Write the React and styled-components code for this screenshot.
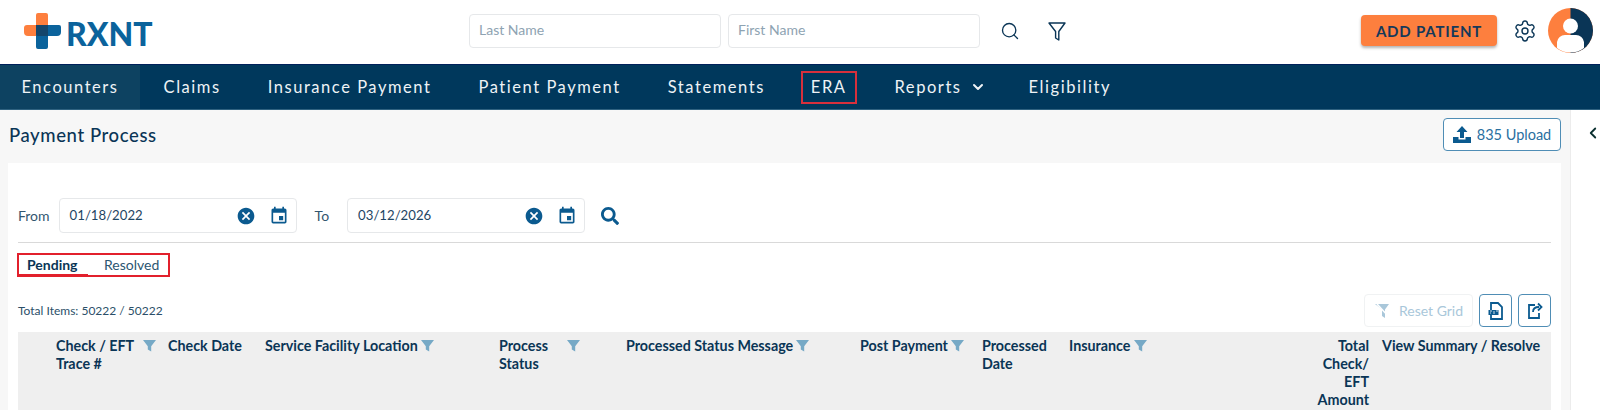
import React from 'react';
import styled, { createGlobalStyle } from 'styled-components';
import { Search, Settings, ChevronLeft, ChevronDown } from 'lucide-react';
import { MdCancel, MdEvent } from 'react-icons/md';
import { FaSearch } from 'react-icons/fa';

const GlobalStyle = createGlobalStyle`
    html, body {
        margin: 0;
        padding: 0;
        background: #fff;
    }
    body {
        font-family: "Lato", "Noto Sans", sans-serif;
        color: #0a3556;
    }
    * { box-sizing: border-box; }
`;

const Page = styled.div`
    width: 1600px;
    height: 410px;
    overflow: hidden;
    display: flex;
    flex-direction: column;
`;

const Header = styled.header`
    height: 64px;
    flex: none;
    display: flex;
    align-items: center;
    padding: 0 6px 3px 24px;
    background: #fff;
`;

const Logo = styled.div`
    width: 445px;
    display: flex;
    align-items: flex-start;
    height: 36px;
`;

const LogoText = styled.span`
    margin: 6px 0 0 5px;
    font-weight: 900;
    font-size: 32px;
    line-height: 30px;
    color: #0b639c;
`;

const TopInput = styled.div`
    width: 252px;
    height: 34px;
    margin-right: 7px;
    padding: 0 9px 3px;
    display: flex;
    align-items: center;
    border: 1px solid #e6e8ea;
    border-radius: 4px;
    font-size: 14px;
    color: #8ea3b2;
`;

const HeaderIcon = styled.span`
    display: flex;
    margin-left: ${(p) => p.$left}px;
    color: #0a3556;
`;

const AddPatient = styled.button`
    width: 136px;
    height: 31px;
    margin-left: 294px;
    border: 0;
    border-radius: 4px;
    background: #fd7f3e;
    box-shadow: 0 2px 3px rgba(0, 0, 0, 0.3);
    font-family: inherit;
    font-size: 15px;
    font-weight: 700;
    letter-spacing: 0.8px;
    color: #15395a;
`;

const Avatar = styled.svg`
    width: 45px;
    height: 45px;
    margin-left: 11px;
    flex: none;
`;

const Nav = styled.nav`
    height: 46px;
    flex: none;
    display: flex;
    align-items: center;
    background: #00385c;
    border-top: 1px solid #00205a;
    border-bottom: 1px solid #2f6280;
`;

const NavItem = styled.div`
    height: 100%;
    padding: 0 ${(p) => p.$padRight || 23.5}px 0 ${(p) => p.$padLeft || 23.5}px;
    display: flex;
    align-items: center;
    gap: 8px;
    font-size: 16.5px;
    letter-spacing: 1.55px;
    color: #eef3f6;
    background: ${(p) => (p.$active ? '#0d4261' : 'transparent')};
`;

const EraBox = styled.div`
    height: 33px;
    margin: 0 14.5px 0 12.5px;
    padding: 0 8px;
    display: flex;
    align-items: center;
    border: 2px solid #d8303c;
    font-size: 16.5px;
    letter-spacing: 1.55px;
    color: #eef3f6;
`;

const Main = styled.div`
    flex: 1;
    display: flex;
    min-height: 0;
`;

const Content = styled.main`
    flex: 1;
    padding: 0 9px 0 8px;
    background: #f7f7f7;
`;

const TitleRow = styled.div`
    height: 53px;
    display: flex;
    align-items: center;
    justify-content: space-between;
    padding: 0 0 4px 1px;
`;

const Title = styled.h1`
    margin: 0;
    font-size: 18.5px;
    font-weight: 500;
    letter-spacing: 0.6px;
    color: #0a3556;
`;

const UploadButton = styled.button`
    width: 118px;
    height: 33px;
    display: flex;
    align-items: center;
    justify-content: center;
    gap: 6px;
    border: 1px solid #4f8db5;
    border-radius: 4px;
    background: #fff;
    font-family: inherit;
    font-size: 14.5px;
    color: #2a6f9f;
`;

const Card = styled.section`
    height: 300px;
    padding: 35px 10px 0;
    background: #fff;
`;

const FilterRow = styled.div`
    display: flex;
    align-items: center;
    padding-bottom: 9px;
    border-bottom: 1px solid #d9d9d9;
    font-size: 14px;
    color: #33566f;
`;

const DateField = styled.div`
    width: 238px;
    height: 35px;
    margin: 0 ${(p) => p.$right}px 0 ${(p) => p.$left}px;
    padding: 0 7px 0 10px;
    display: flex;
    align-items: center;
    border: 1px solid #e6e8ea;
    border-radius: 4px;
    font-size: 13.2px;
    color: #1e4563;
`;

const DateValue = styled.span`
    flex: 1;
    padding-bottom: 2px;
`;

const DateIcons = styled.span`
    display: flex;
    align-items: center;
    gap: 13px;
    color: #0b5a8f;
`;

const Tabs = styled.div`
    width: 153px;
    height: 24px;
    margin: 10px 0 0 -1px;
    display: flex;
    outline: 2px solid #e2202c;
    outline-offset: -2px;
    font-size: 14px;
`;

const Tab = styled.div`
    display: flex;
    align-items: center;
    width: ${(p) => p.$width}px;
    padding: ${(p) => (p.$active ? 2 : 0)}px 0 ${(p) => (p.$active ? 0 : 2)}px ${(p) => p.$pad}px;
    font-weight: ${(p) => (p.$active ? 700 : 400)};
    color: ${(p) => (p.$active ? '#0a3556' : '#2c5672')};
    border-bottom: ${(p) => (p.$active ? '3px solid #e2202c' : '0')};
`;

const Toolbar = styled.div`
    height: 33px;
    margin-top: 17px;
    display: flex;
    align-items: center;
    gap: 6px;
`;

const TotalItems = styled.div`
    flex: 1;
    font-size: 12px;
    color: #2b4f69;
`;

const ResetGrid = styled.button`
    width: 109px;
    height: 33px;
    display: flex;
    align-items: center;
    justify-content: center;
    gap: 7px;
    border: 1px solid #f0f2f3;
    border-radius: 4px;
    background: #fff;
    font-family: inherit;
    font-size: 14px;
    color: #a9c7da;
`;

const IconButton = styled.button`
    width: 33px;
    height: 33px;
    padding: 0;
    display: flex;
    align-items: center;
    justify-content: center;
    border: 1px solid #4f8db5;
    border-radius: 4px;
    background: #fff;
`;

const Table = styled.div`
    margin-top: 5px;
    height: 100px;
    padding-left: 38px;
    display: grid;
    grid-template-columns: 112px 97px 234px 127px 234px 122px 87px 240px 73px 1fr;
    background: #efefef;
`;

const HeadCell = styled.div`
    padding-top: 5px;
    display: flex;
    align-items: flex-start;
    justify-content: ${(p) => (p.$right ? 'flex-end' : 'flex-start')};
    padding-right: ${(p) => (p.$right ? 13 : 0)}px;
    font-size: 14.3px;
    font-weight: 700;
    line-height: 18px;
    color: #0a3556;
    text-align: ${(p) => (p.$right ? 'right' : 'left')};
`;

const HeadLabel = styled.span`
    width: ${(p) => (p.$width ? `${p.$width}px` : 'auto')};
    flex: none;
`;

const FilterIcon = styled.svg`
    width: 13px;
    height: 13px;
    margin: 2px 0 0 3px;
    flex: none;
`;

const SidePanel = styled.aside`
    width: 30px;
    flex: none;
    padding: 14px 0 0 13px;
    background: #fff;
    border-left: 1px solid #ececec;
    color: #0a2f2f;
`;

const ColumnFilter = () => (
    <FilterIcon viewBox="0 0 13 13">
        <path d="M0 1h13L8.2 7.2V12.5L4.8 10.5V7.2z" fill="#76a9c6" />
    </FilterIcon>
);

const Cross = () => (
    <svg width="37" height="36" viewBox="0 0 37 36">
        <path d="M14 0h8a2 2 0 0 1 2 2v21H14a2 2 0 0 1-2-2V2a2 2 0 0 1 2-2z" fill="#fd7f3e" />
        <path d="M3 12h21v11H4a4 4 0 0 1-4-4v-4a3 3 0 0 1 3-3z" fill="#fd7f3e" />
        <path d="M12 12h23a2 2 0 0 1 2 2v5a4 4 0 0 1-4 4h-9v11a2 2 0 0 1-2 2h-8a2 2 0 0 1-2-2z" fill="#0b639c" />
        <path d="M12 12h12v11H14a2 2 0 0 1-2-2z" fill="#14466b" />
    </svg>
);

const FunnelOutline = () => (
    <svg width="20" height="22" viewBox="0 0 20 22" fill="none" stroke="#0a3556" strokeWidth="1.4" strokeLinejoin="round">
        <path d="M2 3h16l-6.2 8.500V20L8.600 18V11.500z" />
    </svg>
);

const UploadIcon = () => (
    <svg width="18" height="18" viewBox="0 0 18 18">
        <path d="M9 0l5.500 6H11v6H7V6H3.500z" fill="#0b5a8f" />
        <path d="M0 11h5.500v2.500h7V11H18v6H0z" fill="#0b5a8f" />
    </svg>
);

const ResetIcon = () => (
    <svg width="18" height="16" viewBox="0 0 18 16">
        <path d="M1 1h14l-4 5.500V15l-3-2V6.500z" fill="#a9c7da" />
        <path d="M3 1l12 13" stroke="#fff" strokeWidth="1.500" />
    </svg>
);

const PdfIcon = () => (
    <svg width="16" height="18" viewBox="0 0 16 18" fill="none">
        <path d="M3 1h7l4 4v12H3z" stroke="#0b5a8f" strokeWidth="1.800" />
        <rect x="0.500" y="8" width="10" height="5" fill="#0b5a8f" />
        <path d="M2 9h2M2 11h1M6 9v3M8 9h2" stroke="#fff" strokeWidth="0.800" />
    </svg>
);

const ExportIcon = () => (
    <svg width="16" height="17" viewBox="0 0 16 17" fill="none" stroke="#0b5a8f" strokeWidth="1.800">
        <path d="M8 3H2v13h10v-5" />
        <path d="M6 10c0-3 2-5 6-5" />
        <path d="M11 1.500l3.500 3.500L11 8.500" />
    </svg>
);

const DateInput = ({ value, left, right }) => (
    <DateField $left={left} $right={right}>
        <DateValue>{value}</DateValue>
        <DateIcons>
            <MdCancel size={20} />
            <MdEvent size={20} />
        </DateIcons>
    </DateField>
);

const navItems = ['Claims', 'Insurance Payment', 'Patient Payment', 'Statements'];

const App = () => {
    return (
        <Page>
            <GlobalStyle />
            <Header>
                <Logo>
                    <Cross />
                    <LogoText>RXNT</LogoText>
                </Logo>
                <TopInput>Last Name</TopInput>
                <TopInput>First Name</TopInput>
                <HeaderIcon $left={13}><Search size={20} strokeWidth={1.6} /></HeaderIcon>
                <HeaderIcon $left={27}><FunnelOutline /></HeaderIcon>
                <AddPatient>ADD PATIENT</AddPatient>
                <HeaderIcon $left={16}><Settings size={24} strokeWidth={1.4} /></HeaderIcon>
                <Avatar viewBox="0 0 45 45">
                    <circle cx="22.500" cy="22.500" r="22.500" fill="#fd7f3e" />
                    <path d="M22.500 0a22.500 22.500 0 0 1 0 45z" fill="#0a3556" />
                    <circle cx="22.500" cy="18" r="7.500" fill="#fff" />
                    <path d="M9 40v-6a8 8 0 0 1 8-7h11a8 8 0 0 1 8 7v6a22.500 22.500 0 0 1-27 0z" fill="#fff" />
                </Avatar>
            </Header>
            <Nav>
                <NavItem $active $padLeft={21.5} $padRight={21.5}>Encounters</NavItem>
                {navItems.map((item) => (
                    <NavItem key={item}>{item}</NavItem>
                ))}
                <EraBox>ERA</EraBox>
                <NavItem $padRight={19.5}>Reports <ChevronDown size={16} strokeWidth={3} /></NavItem>
                <NavItem>Eligibility</NavItem>
            </Nav>
            <Main>
                <Content>
                    <TitleRow>
                        <Title>Payment Process</Title>
                        <UploadButton><UploadIcon />835 Upload</UploadButton>
                    </TitleRow>
                    <Card>
                        <FilterRow>
                            From
                            <DateInput value="01/18/2022" left={9} right={18} />
                            To
                            <DateInput value="03/12/2026" left={18} right={16} />
                            <FaSearch size={18} color="#0b5a8f" />
                        </FilterRow>
                        <Tabs>
                            <Tab $active $width={71} $pad={10}>Pending</Tab>
                            <Tab $width={82} $pad={16}>Resolved</Tab>
                        </Tabs>
                        <Toolbar>
                            <TotalItems>Total Items: 50222 / 50222</TotalItems>
                            <ResetGrid><ResetIcon />Reset Grid</ResetGrid>
                            <IconButton><PdfIcon /></IconButton>
                            <IconButton><ExportIcon /></IconButton>
                        </Toolbar>
                        <Table>
                            <HeadCell><HeadLabel $width={84}>Check / EFT Trace #</HeadLabel><ColumnFilter /></HeadCell>
                            <HeadCell>Check Date</HeadCell>
                            <HeadCell>Service Facility Location<ColumnFilter /></HeadCell>
                            <HeadCell><HeadLabel $width={65}>Process Status</HeadLabel><ColumnFilter /></HeadCell>
                            <HeadCell>Processed Status Message<ColumnFilter /></HeadCell>
                            <HeadCell>Post Payment<ColumnFilter /></HeadCell>
                            <HeadCell><HeadLabel $width={70}>Processed Date</HeadLabel></HeadCell>
                            <HeadCell>Insurance<ColumnFilter /></HeadCell>
                            <HeadCell $right><HeadLabel $width={60}>Total Check/ EFT Amount</HeadLabel></HeadCell>
                            <HeadCell>View Summary / Resolve</HeadCell>
                        </Table>
                    </Card>
                </Content>
                <SidePanel><ChevronLeft size={18} strokeWidth={2.4} /></SidePanel>
            </Main>
        </Page>
    );
};

export default App;
